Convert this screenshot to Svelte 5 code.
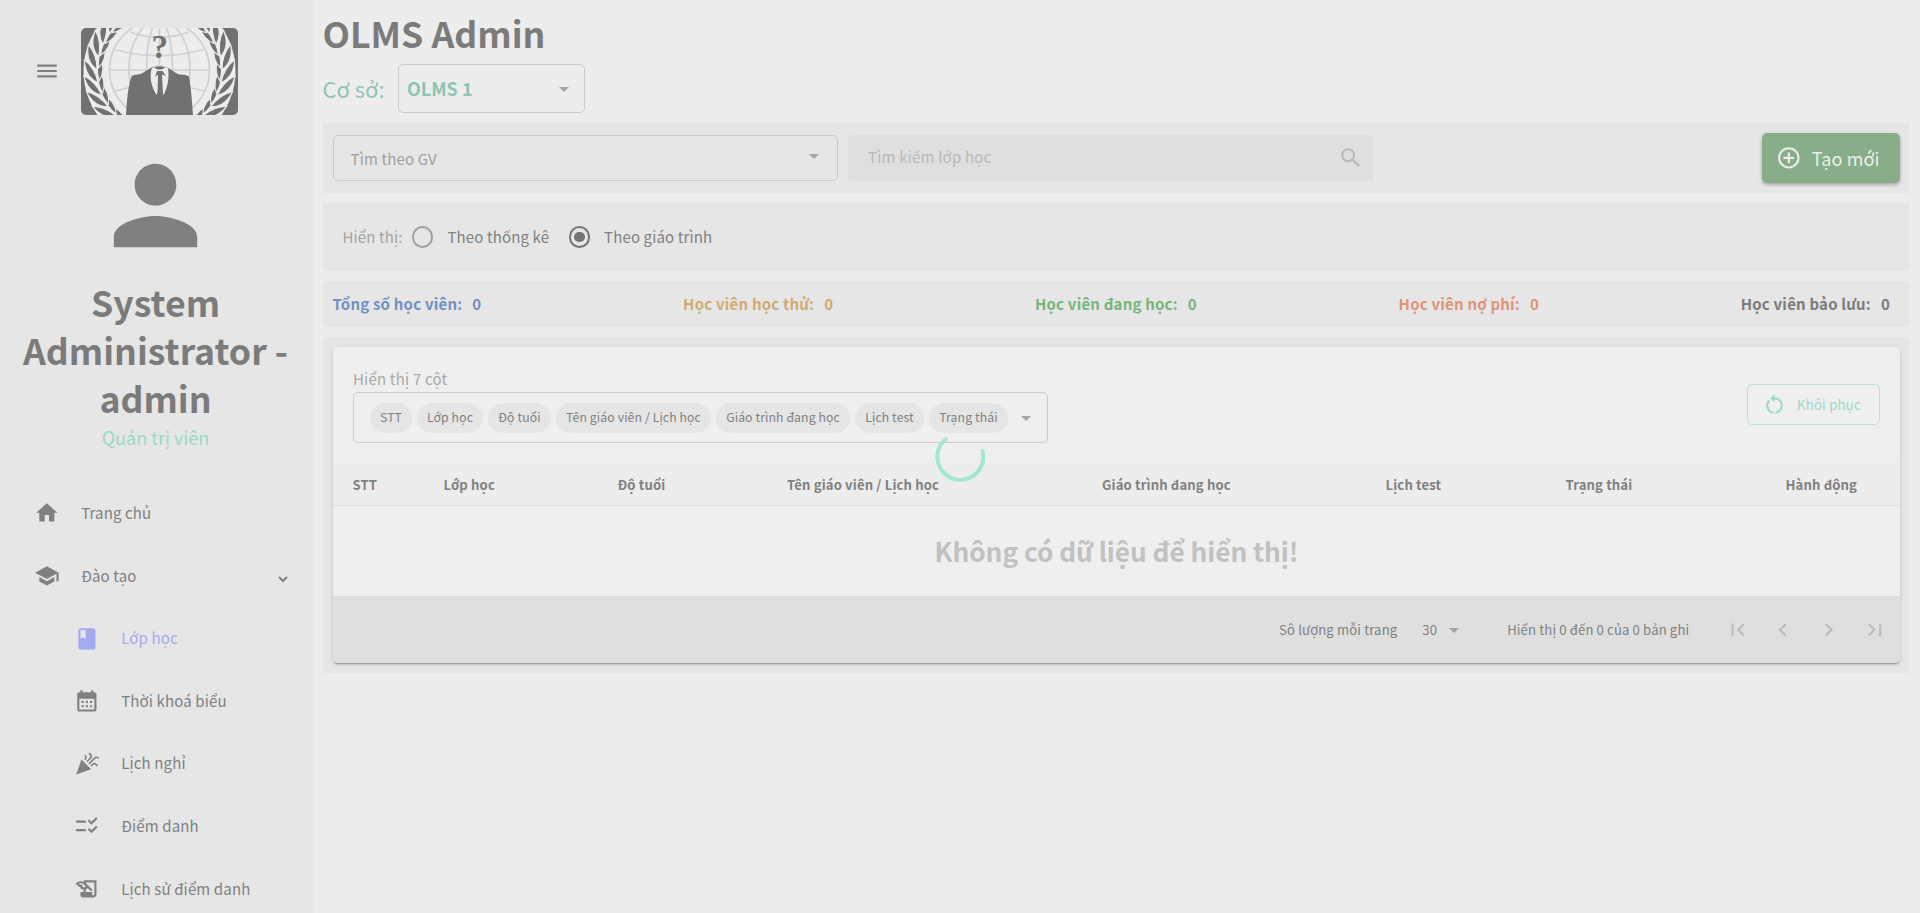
<script>
  const icons = {
    menu: 'M3 18h18v-2H3v2zm0-5h18v-2H3v2zm0-7v2h18V6H3z',
    person: 'M12 12c2.21 0 4-1.79 4-4s-1.79-4-4-4-4 1.79-4 4 1.79 4 4 4zm0 2c-2.67 0-8 1.34-8 4v2h16v-2c0-2.66-5.33-4-8-4z',
    home: 'M10 20v-6h4v6h5v-8h3L12 3 2 12h3v8z',
    school: 'M5 13.18v4L12 21l7-3.82v-4L12 17l-7-3.82zM12 3 1 9l11 6 9-4.91V17h2V9L12 3z',
    book: 'M18 2H6c-1.1 0-2 .9-2 2v16c0 1.1.9 2 2 2h12c1.1 0 2-.9 2-2V4c0-1.1-.9-2-2-2zM6 4h5v8l-2.5-1.5L6 12V4z',
    calendar: 'M19 4h-1V2h-2v2H8V2H6v2H5c-1.11 0-1.99.9-1.99 2L3 20c0 1.1.89 2 2 2h14c1.1 0 2-.9 2-2V6c0-1.1-.9-2-2-2zm0 16H5V10h14v10zM9 14H7v-2h2v2zm4 0h-2v-2h2v2zm4 0h-2v-2h2v2zm-8 4H7v-2h2v2zm4 0h-2v-2h2v2zm4 0h-2v-2h2v2z',
    celebration: 'm2 22 14-5-9-9zM14.53 12.53l5.59-5.59c.49-.49 1.28-.49 1.77 0l.59.59 1.06-1.06-.59-.59c-1.07-1.07-2.82-1.07-3.89 0l-5.59 5.59 1.06 1.06zM10.06 6.88l-.59.59 1.06 1.06.59-.59c1.07-1.07 1.07-2.82 0-3.89l-.59-.59-1.06 1.07.59.59c.48.48.48 1.28 0 1.76zM17.06 11.88l-1.59 1.59 1.06 1.06 1.59-1.59c.49-.49 1.28-.49 1.77 0l1.61 1.61 1.06-1.06-1.61-1.61c-1.08-1.07-2.82-1.07-3.89 0zM15.06 5.88l-3.59 3.59 1.06 1.06 3.59-3.59c1.07-1.07 1.07-2.82 0-3.89l-1.59-1.59-1.06 1.06 1.59 1.59c.48.49.48 1.29 0 1.77z',
    checklist: 'M11 7H2v2h9V7zm0 8H2v2h9v-2zm5.34-4-3.54-3.54 1.41-1.41 2.12 2.12 4.24-4.24L22 5.34 16.34 11zm0 8-3.54-3.54 1.41-1.41 2.12 2.12 4.24-4.24L22 13.34 16.34 19z',
    history: 'M9 4v1.38c-.83-.33-1.72-.5-2.61-.5-1.79 0-3.58.68-4.95 2.05l3.33 3.33h1.11v1.11c.86.86 1.98 1.31 3.11 1.36V15H6v3c0 1.1.9 2 2 2h10c1.66 0 3-1.34 3-3V4H9zm-1.11 6.41V8.26H5.61L4.57 7.22c.54-.24 1.16-.36 1.82-.36 1.2 0 2.33.47 3.18 1.32l1.41 1.41-.2.2c-.51.51-1.19.8-1.92.8-.33 0-.67-.07-.97-.18zM19 17c0 .55-.45 1-1 1s-1-.45-1-1v-2h-6v-2.59c.57-.23 1.1-.57 1.56-1.03l.2-.2L15.59 14H17v-1.41l-6-5.97V6h8v11z',
    arrow: 'M7 10l5 5 5-5z',
    search: 'M15.5 14h-.79l-.28-.27C15.41 12.59 16 11.11 16 9.5 16 5.91 13.09 3 9.5 3S3 5.91 3 9.5 5.91 16 9.5 16c1.61 0 3.09-.59 4.23-1.57l.27.28v.79l5 4.99L20.49 19l-4.99-5zm-6 0C7.01 14 5 11.99 5 9.5S7.01 5 9.5 5 14 7.01 14 9.5 11.99 14 9.5 14z',
    add: 'M13 7h-2v4H7v2h4v4h2v-4h4v-2h-4V7zm-1-5C6.48 2 2 6.48 2 12s4.48 10 10 10 10-4.48 10-10S17.52 2 12 2zm0 18c-4.41 0-8-3.59-8-8s3.59-8 8-8 8 3.59 8 8-3.59 8-8 8z',
    restart: 'M12 5V2L8 6l4 4V7c3.31 0 6 2.69 6 6 0 2.97-2.17 5.43-5 5.91v2.02c3.95-.49 7-3.85 7-7.93 0-4.42-3.58-8-8-8zm-6 8c0-1.65.67-3.15 1.76-4.24L6.34 7.34C4.9 8.79 4 10.79 4 13c0 4.08 3.05 7.44 7 7.93v-2.02c-2.83-.48-5-2.94-5-5.91z',
    first: 'M18.41 16.59 13.82 12l4.59-4.59L17 6l-6 6 6 6zM6 6h2v12H6z',
    prev: 'M15.41 7.41 14 6l-6 6 6 6 1.41-1.41L10.83 12z',
    next: 'M10 6 8.59 7.41 13.17 12l-4.58 4.59L10 18l6-6z',
    last: 'M5.59 7.41 10.18 12l-4.59 4.59L7 18l6-6-6-6zM16 6h2v12h-2z'
  };

  const nav = [
    { icon: 'home', text: 'Trang chủ' },
    { icon: 'school', text: 'Đào tạo', open: true },
    { icon: 'book', text: 'Lớp học', sub: true, active: true },
    { icon: 'calendar', text: 'Thời khoá biểu', sub: true },
    { icon: 'celebration', text: 'Lịch nghỉ', sub: true },
    { icon: 'checklist', text: 'Điểm danh', sub: true },
    { icon: 'history', text: 'Lịch sử điểm danh', sub: true }
  ];

  const stats = [
    ['Tổng số học viên:', 'blue'],
    ['Học viên học thử:', 'gold'],
    ['Học viên đang học:', 'green'],
    ['Học viên nợ phí:', 'coral'],
    ['Học viên bảo lưu:', 'gray']
  ];

  const chips = [
    ['STT', 42], ['Lớp học', 66], ['Độ tuổi', 63], ['Tên giáo viên / Lịch học', 155],
    ['Giáo trình đang học', 134], ['Lịch test', 69], ['Trạng thái', 79]
  ];
  const columns = ['STT', 'Lớp học', 'Độ tuổi', 'Tên giáo viên / Lịch học', 'Giáo trình đang học', 'Lịch test', 'Trạng thái', 'Hành động'];

  // Laurel branch: leaf pairs set along a circular stem
  const stem = [];
  for (let a = 122; a <= 236; a += 12) {
    const r = (a * Math.PI) / 180;
    stem.push({ a, x: 78.5 + 62 * Math.cos(r), y: 43 + 62 * Math.sin(r) });
  }
</script>

{#snippet icon(name, size)}
  <svg class="icon" viewBox="0 0 24 24" width={size} height={size}><path d={icons[name]} /></svg>
{/snippet}

{#snippet laurel()}
  {#each stem as s}
    <g transform="translate({s.x} {s.y}) rotate({s.a + 90})">
      <path d="M-1 -.5 Q7 -12.500 24 -10 Q14 -1 -1 -.5Z" />
      <path d="M1 1 Q10 9.500 24 6 Q14 -1 1 1Z" />
    </g>
  {/each}
{/snippet}

<div class="page">
  <aside>
    <div class="brand">
      {@render icon('menu', 26)}
      <svg class="logo" viewBox="0 0 157 87" width="157" height="87">
        <rect width="157" height="87" fill="#717171" />
        <circle cx="78.5" cy="43" r="76" fill="#ededed" />
        <g fill="none" stroke="#d0d0d0" stroke-width="1.7">
          <circle cx="78.5" cy="42" r="50" />
          <ellipse cx="78.5" cy="42" rx="30.5" ry="50" />
          <ellipse cx="78.5" cy="42" rx="13" ry="50" />
          <path d="M78.5 0v87M28.5 42h100M49 4Q78.5 15 108 4M34 21.500Q78.500 34 123 21.500M34 63Q78.500 50 123 63" />
        </g>
        <g fill="#717171" stroke="#ededed" stroke-width="1.1">
          <g>{@render laurel()}</g>
          <g transform="translate(157 0) scale(-1 1)">{@render laurel()}</g>
        </g>
        <path d="M45 87C46 72 47 58 50.500 48.500Q52 46.500 57 46.500C65 45 69 38 78.500 37C88 38 92 45 99 46.500Q106 46.500 108 48.500C110 60 111 72 112 87Z" fill="#717171" />
        <path d="M71 40Q78.500 34 87 40C89 52 85 63 82.500 67L78.500 60L75.500 67C70 58 68 48 71 40Z" fill="#ededed" />
        <path d="M73 39.500Q78.500 37 84.500 39.500L80.500 41.500H76.500ZM76 43h5.500l3.500 5-4-1.500L82 67h-5.500L77 46.500 74 49Z" fill="#717171" />
        <text class="mark" x="78.700" y="30" text-anchor="middle">?</text>
      </svg>
    </div>
    <div class="user">
      {@render icon('person', 125)}
      <h2>System Administrator - admin</h2>
      <div class="role">Quản trị viên</div>
    </div>
    <nav>
      {#each nav as item}
        <div class="nav-item" class:sub={item.sub} class:active={item.active}>
          {@render icon(item.icon, 25.7)}
          <span>{item.text}</span>
          {#if item.open}
            <svg class="chevron" viewBox="0 0 10 7" width="10" height="7"><path d="M1 1l4 4 4-4" /></svg>
          {/if}
        </div>
      {/each}
    </nav>
  </aside>

  <main>
    <h1>OLMS Admin</h1>
    <div class="site">
      <span>Cơ sở:</span>
      <div class="select branch"><b>OLMS 1</b>{@render icon('arrow', 24)}</div>
    </div>

    <section class="filters">
      <div class="select teacher"><span>Tìm theo GV</span>{@render icon('arrow', 24)}</div>
      <div class="search"><span>Tìm kiếm lớp học</span>{@render icon('search', 25.7)}</div>
      <button class="create">{@render icon('add', 25.7)}<span>Tạo mới</span></button>
    </section>

    <section class="display">
      <span class="label">Hiển thị:</span>
      <i class="radio"></i><span class="opt">Theo thống kê</span>
      <i class="radio on"></i><span class="opt">Theo giáo trình</span>
    </section>

    <section class="stats">
      {#each stats as [label, tone]}
        <div class={tone}><span>{label}</span><span>0</span></div>
      {/each}
    </section>

    <section class="list">
      <div class="card">
        <div class="tools">
          <div>
            <div class="count">Hiển thị 7 cột</div>
            <div class="select cols">
              {#each chips as [chip, width]}
                <span class="chip" style="width: {width}px">{chip}</span>
              {/each}
              {@render icon('arrow', 24)}
            </div>
          </div>
          <button class="reset">{@render icon('restart', 25)}<span>Khôi phục</span></button>
        </div>
        <div class="thead">
          {#each columns as column}<span>{column}</span>{/each}
        </div>
        <div class="empty">Không có dữ liệu để hiển thị!</div>
        <footer>
          <span class="per">Sô lượng mỗi trang</span>
          <span class="num">30</span>
          {@render icon('arrow', 24)}
          <span class="range">Hiển thị 0 đến 0 của 0 bản ghi</span>
          <div class="pager">
            {#each ['first', 'prev', 'next', 'last'] as p}<span>{@render icon(p, 25.7)}</span>{/each}
          </div>
        </footer>
      </div>
    </section>
  </main>

  <svg class="spinner" viewBox="0 0 50 50" width="50" height="50"><path d="M47 17.300A23 23 0 1 1 12 6.100" /></svg>
</div>

<style>
  :global(body) { background: #ededed; overflow: hidden; }
  .page {
    display: flex; position: relative; height: 913px; width: 1920px; overflow: hidden;
    font: 15px/24px "Noto Sans CJK JP", "Noto Sans", sans-serif; letter-spacing: .14px; color: #808080;
  }
  .page * { box-sizing: border-box; }
  .icon { fill: currentColor; flex: none; display: block; }
  h1, h2 { margin: 0; font-size: 35.700px; font-weight: 700; letter-spacing: 0; color: #7b7b7b; }

  aside { width: 313px; flex: none; background: #e6e6e6; padding-top: 28px; }
  .brand { display: flex; align-items: center; height: 87px; padding-left: 34px; gap: 21px; }
  .brand .icon { margin-top: -2px; }
  .logo { border-radius: 5px; flex: none; }
  .mark { font: bold 33px "Liberation Serif", serif; fill: #717171; letter-spacing: 0; }
  .user { display: flex; flex-direction: column; align-items: center; text-align: center; padding: 28px 15px 0 13px; }
  h2 { line-height: 48px; width: 282px; margin-top: 10px; }
  .role { font-size: 18px; line-height: 27px; color: #99d9c6; letter-spacing: 0; margin-top: 2px; }
  nav { padding-top: 31px; }
  .nav-item { display: flex; align-items: center; height: 62.550px; padding-left: 34px; }
  .nav-item span { margin-left: 21.500px; }
  .nav-item.sub { padding-left: 74px; }
  .nav-item.active { color: #a5a9ee; }
  .chevron { margin: 7px 25.500px 0 auto; fill: none; stroke: #808080; stroke-width: 2; }

  main { flex: 1; padding: 8px 10px 0; min-width: 0; }
  h1 { height: 56px; line-height: 50px; margin-left: -.5px; }
  .site { display: flex; height: 49px; align-items: center; }
  .site > span { font-size: 22px; width: 75px; color: #8fc5b5; letter-spacing: 0; margin-top: -2px; text-indent: -.5px; }
  .select { display: flex; align-items: center; justify-content: space-between; border: 1px solid #cacaca; border-radius: 5px; }
  .select .icon { color: #a4a4a4; }
  .branch { width: 187px; height: 49px; padding: 0 8px 0 8px; }
  .branch b { font-size: 18px; color: #8cc4b3; letter-spacing: 0; margin-top: -1px; }

  section { background: #e6e6e6; padding: 10px; margin-top: 10px; }
  .filters { display: flex; align-items: center; height: 70px; }
  .teacher { width: 505px; height: 46px; padding: 0 11px 0 16.500px; color: #a0a0a0; }
  .teacher span { margin-top: 2px; }
  .teacher .icon { margin-top: -5px; }
  .search { width: 526px; height: 46px; margin-left: 10px; padding: 0 10px 0 20px; background: #dfdfdf; border-radius: 4px; display: flex; align-items: center; justify-content: space-between; color: #b8b8b8; letter-spacing: .2px; }
  .search span { margin-top: -2px; }
  button { font: inherit; display: flex; align-items: center; border: 0; }
  .create { width: 138px; height: 50px; margin-left: auto; padding: 0 0 0 14px; border-radius: 5px; background: #88ad89; color: #eee; font-size: 18px; letter-spacing: .15px; box-shadow: 0 2px 3px #0003, 0 1px 5px #0000001a; }
  .create span { margin-left: 10px; }
  .display { display: flex; align-items: center; height: 68px; padding-left: 19.500px; }
  .label { width: 69.500px; color: #a4a4a4; }
  .radio { width: 21.400px; height: 21.400px; border-radius: 50%; border: 2px solid #a0a0a0; display: grid; place-items: center; }
  .radio.on { border-color: #747474; margin-left: 19.500px; }
  .radio.on::after { content: ""; width: 10.700px; height: 10.700px; border-radius: 50%; background: #747474; }
  .opt { margin-left: 14px; }
  .stats { display: flex; justify-content: space-between; height: 46px; align-items: center; font-weight: 700; letter-spacing: .2px; padding: 10px 10px 10px 9.500px; }
  .stats div { display: flex; gap: 10px; margin-right: 10px; }
  .blue { color: #7390c4; }
  .gold { color: #cfab70; }
  .green { color: #78b57c; }
  .coral { color: #e09378; }
  .gray { color: #7b7b7b; }

  .list { height: 336px; }
  .card { height: 316px; border-radius: 5px; background: #efefef; overflow: hidden; box-shadow: 0 2px 2px -1px #0005, 0 1px 4px #0002; }
  .tools { display: flex; justify-content: space-between; height: 116px; padding: 20px 20px 0; }
  .count { height: 25px; line-height: 24px; color: #a8a8a8; letter-spacing: .2px; }
  .cols { width: 695px; height: 51px; justify-content: flex-start; padding: 0 0 0 16px; gap: 5px; }
  .cols .icon { margin-left: 1px; }
  .chip { height: 30px; border-radius: 15px; background: #e5e5e5; text-align: center; font-size: 12.190px; line-height: 28.500px; white-space: nowrap; letter-spacing: .12px; }
  .reset { width: 133px; height: 41px; margin-top: 17px; padding: 0 0 0 14px; border: 1px solid #b9e2d6; border-radius: 5px; background: none; color: #99d9c6; font-size: 13.125px; letter-spacing: .25px; }
  .reset span { margin-left: 10px; }
  .thead { display: grid; grid-template-columns: 91px 174px 169.500px 315px 283.500px 180px 220px auto; height: 43px; padding-left: 19.500px; line-height: 43px; background: #ededed; border-bottom: 1px solid #dedede; font-size: 13.125px; font-weight: 700; white-space: nowrap; }
  .empty { height: 90px; line-height: 90px; text-align: center; font-size: 26.250px; font-weight: 700; letter-spacing: -.05px; color: #c1c1c1; }
  footer { display: flex; align-items: center; justify-content: flex-end; height: 67px; background: #dfdfdf; font-size: 13.125px; padding-right: 2.500px; }
  .num { margin-left: 25px; }
  footer > .icon { color: #a4a4a4; margin: 1px 0 0 5px; }
  .range { margin-left: 41px; }
  .pager { display: flex; color: #bcbcbc; margin-left: 25.500px; }
  .pager span { width: 45.700px; display: grid; place-items: center; }
  .spinner { position: absolute; left: 935px; top: 431.500px; fill: none; stroke: #a3e6d3; stroke-width: 4; }
</style>
